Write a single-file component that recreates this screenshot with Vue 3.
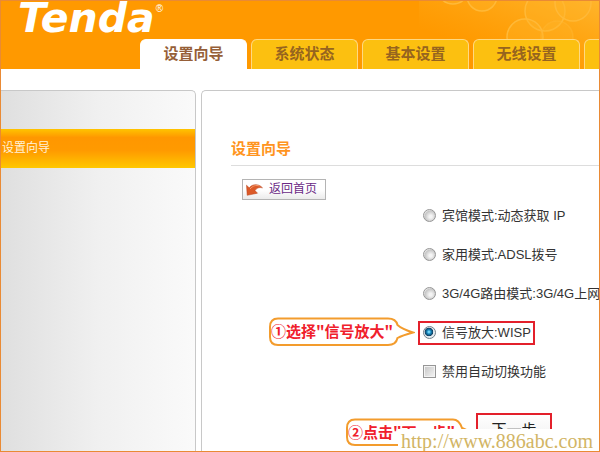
<script setup>
import { ref } from 'vue'

const tabs = ['设置向导', '系统状态', '基本设置', '无线设置', '']
const activeTab = ref(0)

const modes = [
  { id: 'hotel', label: '宾馆模式:动态获取 IP' },
  { id: 'home', label: '家用模式:ADSL拨号' },
  { id: 'mobile', label: '3G/4G路由模式:3G/4G上网' },
  { id: 'wisp', label: '信号放大:WISP' }
]
const mode = ref('wisp')
const autoSwitchOff = ref(false)
</script>

<template>
  <div class="page">
    <header class="header">
      <svg class="bubbles" viewBox="0 0 180 68" aria-hidden="true">
        <defs>
          <linearGradient id="glow" x1="0" y1="1" x2="1" y2="0">
            <stop offset="0.3" stop-color="#ffab18" stop-opacity="0" />
            <stop offset="1" stop-color="#ffb52c" />
          </linearGradient>
        </defs>
        <rect width="180" height="68" fill="url(#glow)" />
        <g fill="#ffb428" fill-opacity="0.35" stroke="#ffb938" stroke-width="1.5">
          <circle cx="63" cy="-5" r="15" />
          <circle cx="34" cy="-13" r="16" />
          <circle cx="126" cy="10" r="20" />
          <circle cx="154" cy="2" r="18" />
          <circle cx="106" cy="36" r="18" />
          <circle cx="138" cy="36" r="16" stroke-opacity="0.4" />
        </g>
      </svg>
      <div class="logo">Tenda<sup class="reg">®</sup></div>
      <nav class="tabs">
        <a
          v-for="(tab, i) in tabs"
          :key="i"
          href="#"
          class="tab"
          :class="{ active: i === activeTab }"
          @click.prevent="activeTab = i"
        >{{ tab }}</a>
      </nav>
    </header>

    <div class="body">
      <aside class="sidebar">
        <a href="#" class="side-link">设置向导</a>
      </aside>

      <main class="main">
        <h1 class="title">设置向导</h1>
        <button type="button" class="back">
          <svg class="back-icon" viewBox="0 0 17 13" aria-hidden="true">
            <path
              d="M0.5 2.200 L3.200 4.800 C6 1 12.500 0.200 16.500 4.800 C13 4 10.500 5 9 7.600 L11.500 10.200 L1.200 12.300 Z"
              fill="#dc5a28"
              stroke="#b9431c"
              stroke-width="0.5"
            />
            <path d="M4 6 C7 2.600 10 1.800 13.500 3" fill="none" stroke="#f39a6d" />
          </svg>
          返回首页
        </button>

        <form class="options" @submit.prevent>
          <div v-for="m in modes" :key="m.id" class="option">
            <div v-if="m.id === 'wisp'" class="callout">
              <svg class="bubble" viewBox="0 0 146 30" aria-hidden="true">
                <path
                  d="M9 1.500 H119 Q127 1.500 128.500 8 Q133 12 144 15.500 Q133 18.500 128.500 21 Q127 28 119 28 H9 Q1 28 1 20 V10 Q1 1.500 9 1.500 Z"
                  fill="#fff"
                  stroke="#f39c2d"
                  stroke-width="2"
                />
              </svg>
              <span class="callout-text">①选择"信号放大"</span>
            </div>
            <label class="choice" :class="{ marked: m.id === 'wisp' }">
              <input v-model="mode" type="radio" name="mode" class="radio" :value="m.id" />
              <span>{{ m.label }}</span>
            </label>
          </div>
          <div class="option">
            <label class="choice">
              <input v-model="autoSwitchOff" type="checkbox" class="check" />
              <span>禁用自动切换功能</span>
            </label>
          </div>
          <div class="actions">
            <div class="callout second">
              <svg class="bubble" viewBox="0 0 146 30" aria-hidden="true">
                <path
                  d="M9 1.500 H107 Q113 1.500 116 10 L127 15 L116 20 Q114 27 107 27 H9 Q1 27 1 19 V10 Q1 1.500 9 1.500 Z"
                  fill="#fff"
                  stroke="#f39c2d"
                  stroke-width="2"
                />
              </svg>
              <span class="callout-text">②点击"下一步"</span>
            </div>
            <button type="submit" class="next">下一步</button>
          </div>
        </form>
      </main>
    </div>

    <div class="watermark">http://www.886abc.com</div>
  </div>
</template>

<style>
body {
  margin: 0;
}
</style>

<style scoped>
.page {
  position: relative;
  box-sizing: border-box;
  display: flex;
  flex-direction: column;
  height: 100vh;
  overflow: hidden;
  border: 1px solid #e98a35;
  background: #fff;
  color: #333;
  font-family: "Liberation Sans", "Noto Sans CJK SC", sans-serif;
  font-size: 13px;
  line-height: 20px;
}

.header {
  position: relative;
  display: flex;
  flex-direction: column;
  justify-content: space-between;
  height: 68px;
  flex: none;
  overflow: hidden;
  background: #ff9900;
}

.bubbles {
  position: absolute;
  top: 0;
  right: 0;
  width: 180px;
  height: 68px;
}

.logo {
  position: relative;
  display: flex;
  height: 38px;
  padding-left: 17px;
  color: #fff;
  font: italic bold 41px/34px "DejaVu Sans", sans-serif;
}

.reg {
  padding-left: 1px;
  font: 10px/16px "Liberation Sans", sans-serif;
}

.tabs {
  position: relative;
  display: flex;
  gap: 4px;
  padding-left: 139px;
}

.tab {
  box-sizing: border-box;
  flex: none;
  width: 107px;
  height: 30px;
  border: 1px solid #ffd982;
  border-bottom: 0;
  border-radius: 6px 6px 0 0;
  background: #fcc010;
  color: #96641f;
  font-size: 15px;
  font-weight: bold;
  line-height: 28px;
  text-align: center;
  text-decoration: none;
}

.tab.active {
  border-color: #fff;
  background: #fff;
  color: #965f38;
}

.body {
  display: flex;
  flex: 1;
  gap: 5px;
  min-height: 0;
  padding-top: 21px;
}

.sidebar {
  box-sizing: border-box;
  flex: none;
  width: 195px;
  padding-top: 38px;
  border: 1px solid #c8c8c8;
  border-width: 1px 1px 0 0;
  border-radius: 0 5px 0 0;
  background: linear-gradient(90deg, #dfdfdf, #f0f0f0 50%, #fafafa);
}

.side-link {
  display: block;
  padding-left: 1px;
  background: linear-gradient(#ffc400, #ff9700 22%, #ff9a00 55%, #ffc800);
  color: #fff3d8;
  font-size: 12px;
  line-height: 39px;
  text-decoration: none;
}

.main {
  box-sizing: border-box;
  flex: 1;
  min-width: 0;
  padding: 42px 0 0 29px;
  border: 1px solid #c8c8c8;
  border-width: 1px 0 0 1px;
  border-radius: 5px 0 0 0;
}

.title {
  margin: 0 0 13px;
  padding: 2px 0;
  border-bottom: 1px solid #ddd;
  color: #ff9420;
  font-size: 15px;
  font-weight: bold;
  line-height: 28px;
}

.back {
  display: flex;
  align-items: center;
  gap: 6px;
  height: 21px;
  margin-left: 11px;
  padding: 0 8px 0 3px;
  border: 1px solid #b4b4b4;
  background: linear-gradient(#fff 50%, #ebebeb);
  color: #6b2a86;
  font: inherit;
  font-size: 12px;
  line-height: 19px;
}

.back-icon {
  width: 17px;
  height: 13px;
}

.options {
  padding: 6px 0 0 187px;
}

.option {
  position: relative;
  display: flex;
  align-items: center;
  height: 39px;
  margin-top: -10px;
  margin-bottom: 10px;
}

.choice {
  display: flex;
  align-items: center;
  gap: 6px;
  padding: 0 2px 0 3px;
  border: 2px solid transparent;
  white-space: nowrap;
}

.marked {
  border-color: #e3202b;
}

.radio,
.check {
  appearance: none;
  flex: none;
  width: 13px;
  height: 13px;
  margin: 0;
  border: 1px solid #969696;
}

.radio {
  border-radius: 50%;
  background: radial-gradient(circle at 60% 60%, #f4f4f4 15%, #c6c6c6 60%, #f0f0f0 75%);
}

.radio:checked {
  border-color: #71808a;
  background: radial-gradient(circle at 45% 45%, #6fd4f7 8%, #1583b8 25%, #123f60 46%, #e6edf1 54%);
}

.check {
  background: linear-gradient(135deg, #c5c5c5, #f5f5f5);
  box-shadow: inset 0 0 0 1px #f3f3f3;
}

.check:checked {
  background: #316a94;
}

.callout {
  position: absolute;
  top: 4px;
  left: -149px;
  width: 146px;
  height: 30px;
}

.bubble {
  position: absolute;
  inset: 0;
  width: 100%;
  height: 100%;
}

.callout-text {
  position: absolute;
  top: 0;
  left: 2px;
  color: #f0202c;
  font-family: "Noto Sans CJK SC", sans-serif;
  font-size: 15px;
  font-weight: bold;
  line-height: 28px;
  white-space: nowrap;
}

.actions {
  position: relative;
  padding: 12px 0 0 58px;
}

.second {
  top: 17px;
  left: -72px;
}

.next {
  width: 76px;
  height: 34px;
  padding: 0;
  border: 2px solid #e3202b;
  background: linear-gradient(#fff, #eee);
  color: #222;
  font: inherit;
  font-size: 15px;
}

.watermark {
  position: absolute;
  right: -1px;
  bottom: -1px;
  box-sizing: border-box;
  width: 202px;
  height: 23px;
  padding-right: 4px;
  background: #fff;
  color: #d2b565;
  font: 20px/24px "Liberation Serif", serif;
  text-align: center;
}
</style>
